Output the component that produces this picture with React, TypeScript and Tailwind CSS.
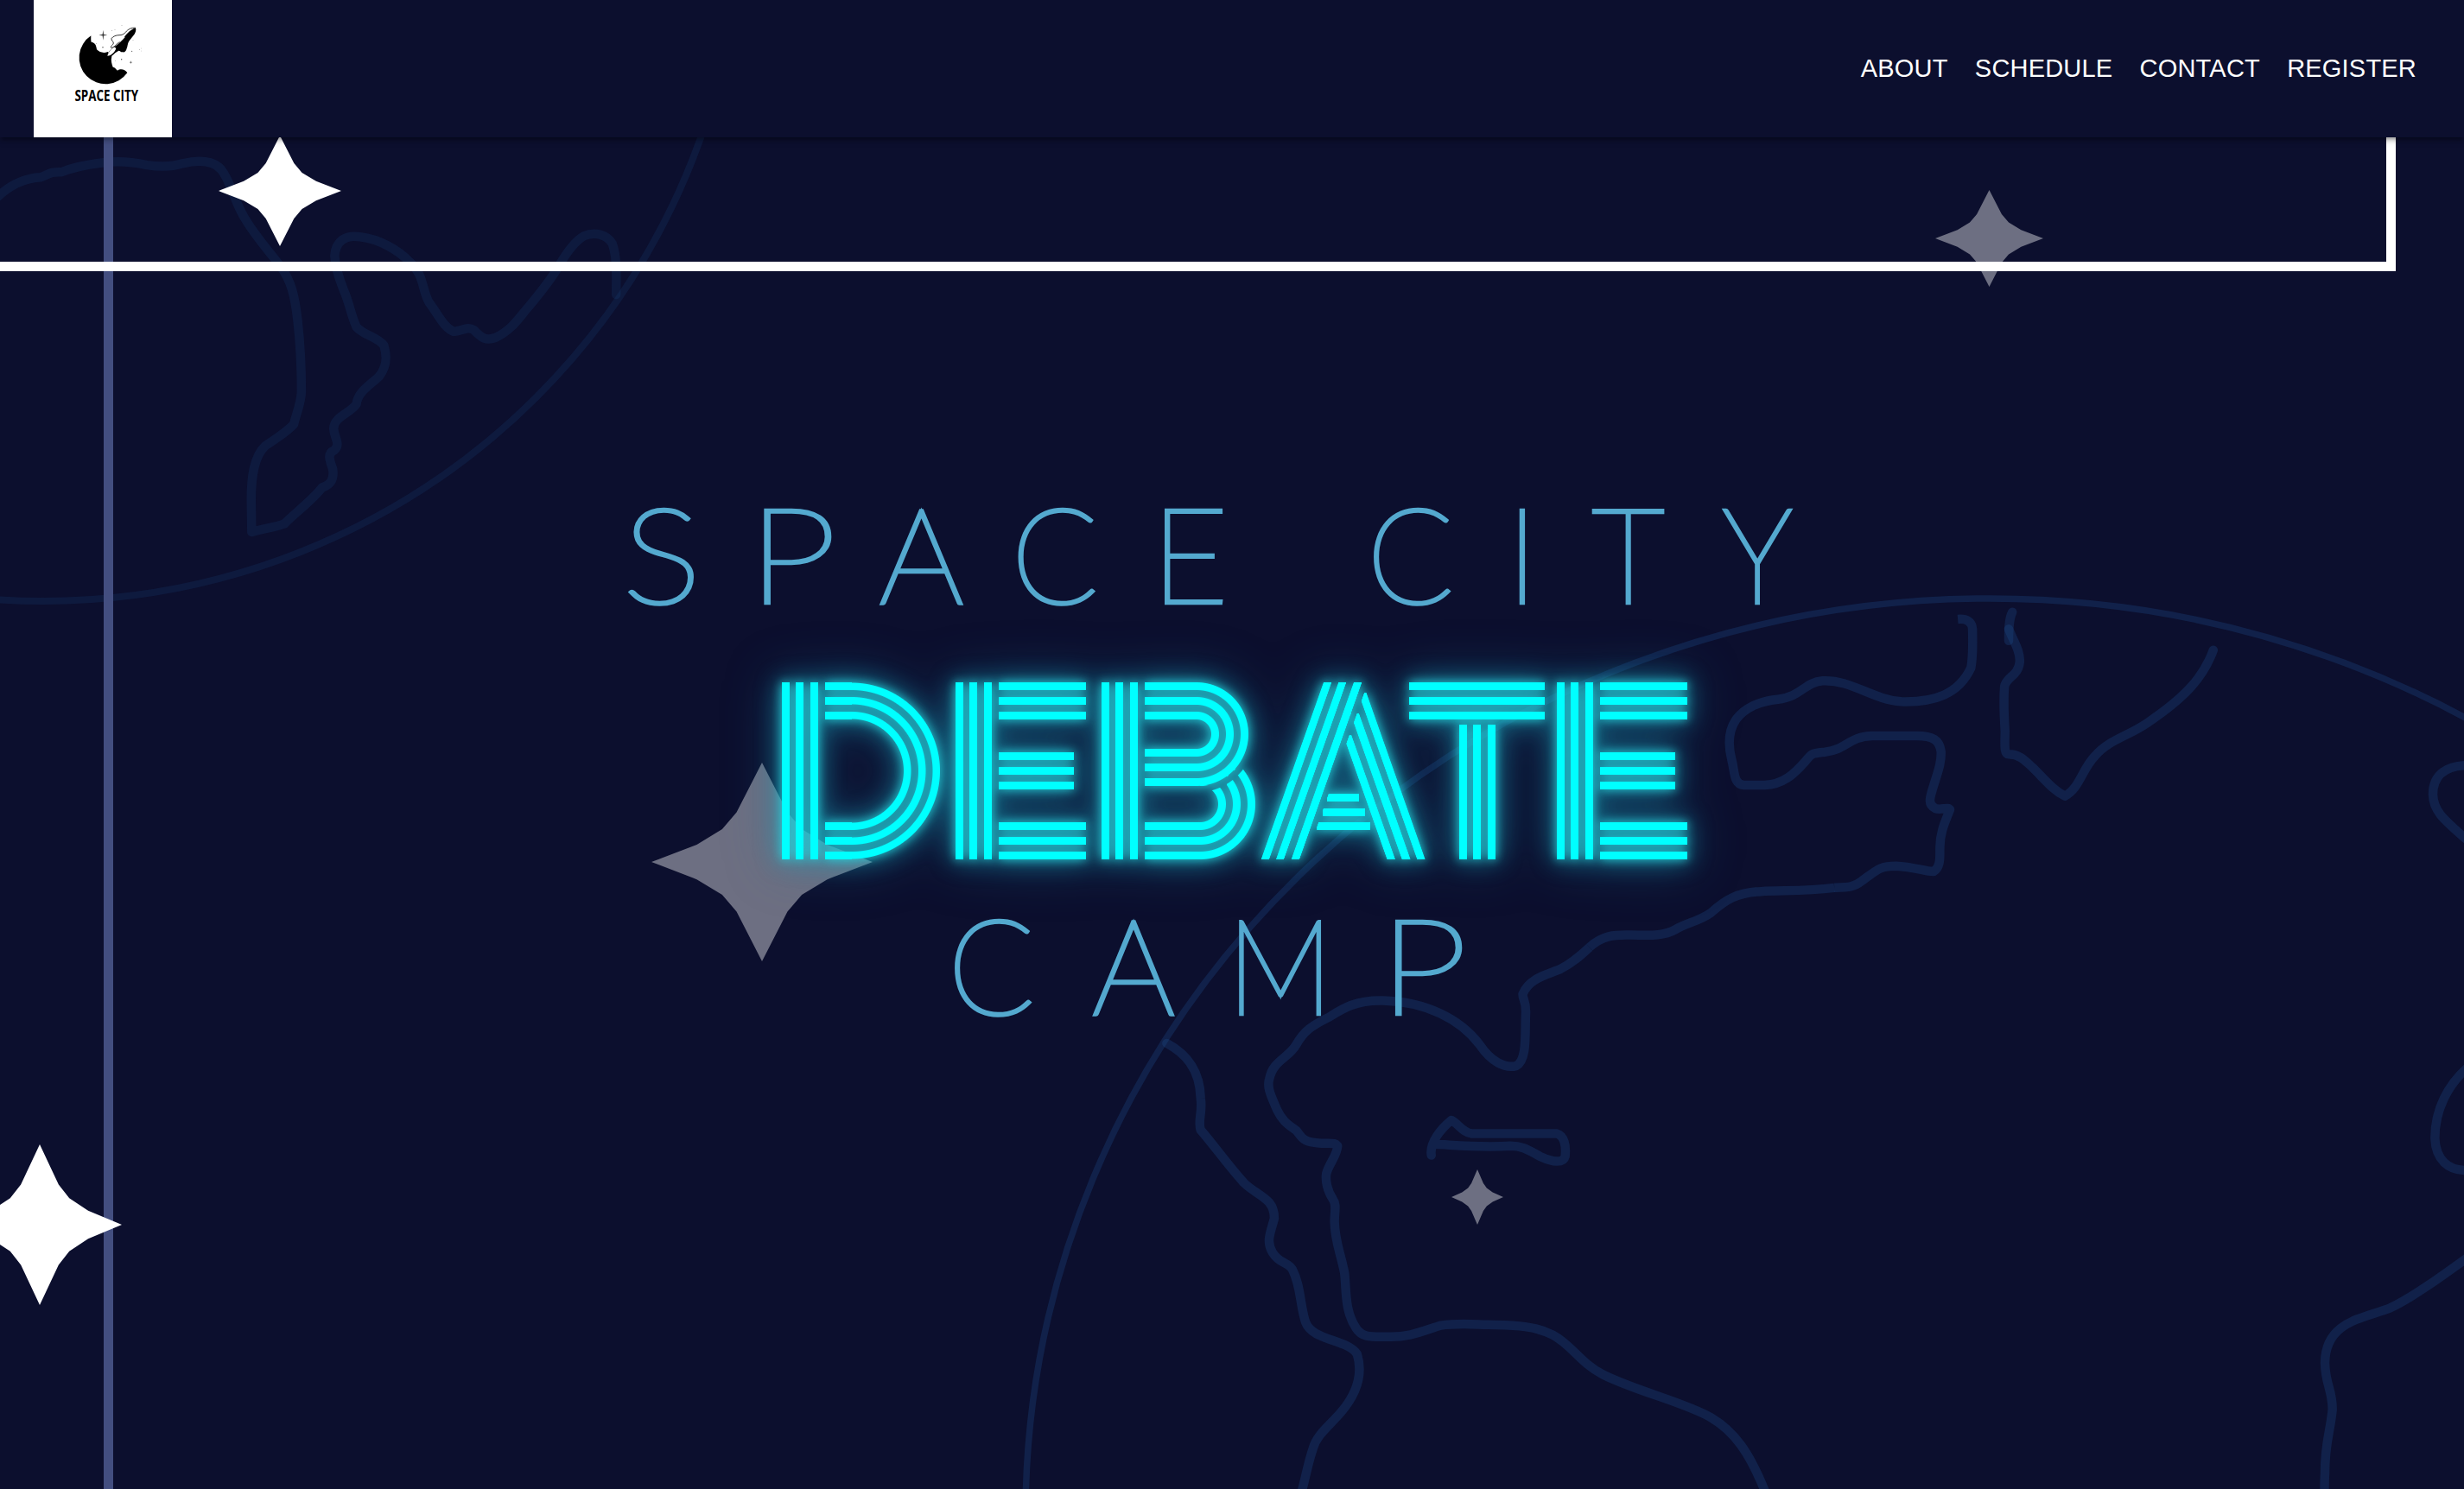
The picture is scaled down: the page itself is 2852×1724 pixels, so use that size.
function Star({ className }: { className: string }) {
  return (
    <svg className={"absolute " + className} viewBox="-100 -100 200 200" preserveAspectRatio="none" fill="#fff" aria-hidden="true">
      <path d="M100 0 59 17.5 36 33 23 50 0 100-23 50-36 33-59 17.5-100 0-59-17.5-36-33-23-50 0-100 23-50 36-33 59-17.5Z" />
    </svg>
  );
}

function Globes() {
  return (
    <svg className="absolute inset-0 h-full w-full" viewBox="0 0 2852 1724" fill="none" strokeLinecap="round" strokeLinejoin="round" aria-hidden="true">
      <g stroke="rgba(30,75,140,.18)">
        <circle cx="50" cy="-112" r="808" strokeWidth="8" />
        <path
          strokeWidth="10.5"
          vectorEffect="non-scaling-stroke"
          transform="translate(0 150) scale(.5486 .35714)"
          d="M-10 225C20 180 50 158 85 155C100 148 105 135 130 138C150 125 180 115 215 108C250 100 280 105 310 115C340 122 365 120 385 110C420 98 450 100 467 130C485 165 490 210 510 270C530 330 560 380 590 440C615 490 622 540 628 620C634 700 636 780 636 850C635 890 625 920 620 955C605 980 580 1005 560 1025C535 1060 530 1130 530 1200L531 1305C550 1295 580 1290 600 1278C625 1240 660 1200 680 1160C700 1150 705 1130 702 1100C695 1070 690 1050 705 1040C720 1020 705 1000 704 970C704 930 740 920 752 890C755 850 780 830 800 800C815 770 818 740 810 700C795 670 770 670 752 640C740 600 737 560 725 520C715 480 708 450 706 410C708 360 730 340 760 348C800 355 840 390 865 430C895 470 890 520 905 560C925 600 935 640 957 655C975 655 985 635 1000 650C1015 675 1025 685 1045 675C1080 650 1095 610 1115 575C1145 520 1165 480 1180 440C1195 400 1215 360 1232 345C1255 330 1280 340 1292 370C1303 420 1300 480 1300 535"
        />
      </g>
      <g stroke="rgba(30,75,140,.3)" strokeWidth="10.5">
        <ellipse cx="2303" cy="1755" rx="1116" ry="1062" strokeWidth="7.5" />
        <path
          vectorEffect="non-scaling-stroke"
          transform="translate(1080 1040) scale(.5102 .43623)"
          d="M530 385C570 410 605 450 607 530C612 570 600 590 607 615C640 660 670 710 705 755C735 790 775 795 774 850C765 890 755 910 770 940C785 970 805 965 815 985C835 1030 832 1080 845 1125C860 1175 940 1170 962 1210C975 1260 965 1310 925 1365C895 1405 870 1425 862 1460C850 1500 845 1540 835 1580"
        />
        <path
          strokeLinecap="butt"
          vectorEffect="non-scaling-stroke"
          transform="translate(1400 1100) scale(.44643 .39796)"
          d="M1442 1580C1400 1460 1360 1400 1300 1360C1230 1315 1110 1285 1020 1235C960 1200 940 1150 890 1120C840 1090 780 1092 720 1090C670 1088 640 1085 600 1092C560 1105 520 1128 460 1125C420 1125 395 1128 380 1100C350 1050 355 990 350 940C340 880 325 850 324 790C324 760 330 740 320 725C305 700 300 670 303 650C310 620 330 600 332 570C325 560 320 563 290 562C240 560 240 545 225 525C205 508 190 500 175 465C160 425 148 400 155 375C165 320 205 315 225 275C245 235 265 220 310 195C345 170 380 145 450 147C560 150 650 200 700 275C730 325 765 345 795 337C825 320 817 240 820 180C820 145 812 145 812 128C830 80 880 70 910 55C940 38 960 18 985 -8"
        />
        <path
          strokeLinecap="butt"
          vectorEffect="non-scaling-stroke"
          transform="translate(1400 560) scale(.45918 .35714)"
          d="M957.6 1503C990 1464 1020 1462 1060 1463C1100 1463 1140 1470 1175 1445C1200 1425 1235 1418 1265 1390C1300 1350 1330 1325 1390 1322C1450 1318 1500 1322 1575 1310"
        />
        <path
          strokeLinecap="butt"
          vectorEffect="non-scaling-stroke"
          transform="translate(1900 660) scale(.60714 .33333)"
          d="M367.6 1103.6C395 1102 405 1102 420 1080C450 1040 455 1028 485 1028C520 1030 545 1050 557 1047C572 1030 568 990 569 960C569 910 580 870 588 832C585 822 570 835 560 828C545 815 550 790 555 760C565 700 572 670 571 630C568 590 555 576 525 576L440 576C395 578 390 625 350 632C325 637 325 635 312 665C290 710 270 745 235 747L195 747C175 745 178 700 172 660C165 610 165 560 180 520C195 480 225 455 260 449C305 440 310 390 345 385C400 380 440 450 495 457C560 460 605 430 628 340C633 290 631 240 631 205C630 180 620 168 603 171"
        />
        <path vectorEffect="non-scaling-stroke" transform="translate(1900 660) scale(.60714 .33333)" d="M707 146C700 170 700 210 700 245" />
        <path
          vectorEffect="non-scaling-stroke"
          transform="translate(1900 660) scale(.60714 .33333)"
          d="M700 205C710 250 722 280 721 320C718 370 695 370 692 405C690 450 691 500 693 560C693 600 690 640 700 640C720 640 730 660 745 685C770 730 785 765 807 785C835 760 840 690 865 645C890 590 930 575 965 530C1030 450 1070 380 1090 278"
        />
        <path
          vectorEffect="non-scaling-stroke"
          transform="translate(2500 800) scale(.33333 .63776)"
          d="M1070 135C1000 135 948 150 948 188C950 220 990 235 1070 272M1070 683C1000 715 955 760 955 812C958 850 1000 872 1070 870M1070 1028C980 1062 880 1100 800 1120C700 1140 575 1145 573 1220C575 1260 600 1270 599 1305C590 1350 573 1365 573 1420C570 1450 570 1465 585 1490C600 1530 600 1545 630 1580"
        />
        <path
          vectorEffect="non-scaling-stroke"
          transform="translate(1400 1100) scale(.44643 .39796)"
          d="M575 597C570 560 600 520 627 495C645 505 655 530 680 534L900 534C920 540 925 570 922 600C918 620 890 618 860 602C830 585 815 570 780 570C700 575 640 568 585 565"
        />
      </g>
    </svg>
  );
}

function Logo() {
  return (
    <svg className="h-full w-full" viewBox="0 0 160 159" role="img" aria-label="Space City">
      <g transform="translate(31 0) scale(.33333)">
        <path d="M106 124A92 91.5 0 1 0 232 253C224 240 208 238 198 245C192 240 190 234 182 233C178 222 174 210 178 196L164 180C150 186 136 182 126 172C124 156 120 148 107 146C105 138 106 132 106 124Z" />
        <path d="M261 97C264 106 260 116 253 124L240 140C232 150 234 160 230 168C228 178 222 183 216 181C209 182 207 176 202 176L190 184C184 190 178 196 172 198C164 200 160 196 162 190C168 178 178 168 190 158L222 128C232 116 244 102 261 97Z" />
        <path d="M163 194C166 182 176 170 186 163L193 167C190 180 176 194 163 194Z" fill="#fff" />
        <path d="M222 128C210 140 200 152 186 160" stroke="#fff" strokeWidth="5" fill="none" />
        <path d="M261 97C246 95 234 102 226 112C220 120 212 122 204 122C194 122 182 126 177 134C176 140 184 144 184 150C182 158 172 160 176 166C184 168 196 150 206 146" stroke="#000" strokeWidth="2.4" fill="none" />
        <path d="M148 104L150 119 163 122 150 124 148 140 146 124 133 122 146 119Z" fill="#333" />
        <path d="M244 210L245 215 250 216 245 218 244 223 243 218 239 216 243 215Z" fill="#555" />
        <g fill="#555">
          <circle cx="147" cy="164" r="2.2" /><circle cx="212" cy="206" r="2.2" /><circle cx="248" cy="178" r="1.8" />
          <circle cx="179" cy="107" r="1.3" /><circle cx="189" cy="104" r="1.2" /><circle cx="213" cy="88" r="1.3" />
          <circle cx="275" cy="172" r="1.3" /><circle cx="281" cy="168" r="1" /><circle cx="281" cy="177" r="1" />
          <circle cx="125" cy="151" r="1.3" /><circle cx="191" cy="211" r="1" /><circle cx="252" cy="139" r="1.2" />
        </g>
      </g>
      <text x="47.5" y="117.3" textLength="73.5" lengthAdjust="spacingAndGlyphs" className="font-['Open_Sans',sans-serif] text-[18px] font-bold">SPACE CITY</text>
    </svg>
  );
}

// Each neon letter is text used as a clip for striped gradients.
const neon =
  "flex h-[205px] shrink-0 justify-center whitespace-nowrap bg-clip-text bg-no-repeat text-transparent [-webkit-text-stroke:96px_transparent]";

const letterE =
  "w-[151px] [background-image:var(--v),var(--h),var(--h),var(--h)] [background-size:42px_205px,101px_43px,87px_43px,101px_43px] [background-position:0_0,50px_0,50px_81px,50px_162px]";

function Thin({ c, className }: { c: string; className: string }) {
  return <span className={"flex h-[112px] shrink-0 justify-center " + className}>{c}</span>;
}

export default function App() {
  return (
    <div className="relative flex h-[1724px] w-full flex-col overflow-hidden bg-[#0c0f2e]">
      <Globes />
      <div className="absolute top-0 left-[120px] h-full w-[11px] bg-[#434e80]" />
      <div className="absolute top-0 left-0 h-[314px] w-[2773px] border-r-[11px] border-b-[11px] border-white" />
      <Star className="top-[157px] left-[253px] h-[128px] w-[142px]" />
      <Star className="top-[220px] left-[2240px] h-[112px] w-[125px] opacity-40" />
      <Star className="top-[883px] left-[754px] h-[230px] w-[256px] opacity-40" />
      <Star className="top-[1354px] left-[1680px] h-[64px] w-[60px] opacity-40" />
      <Star className="top-[1325px] left-[-49px] h-[186px] w-[190px]" />

      <header className="relative flex h-[159px] shrink-0 items-center justify-between bg-[#0c0f2e] pr-[55px] pl-[39px] shadow-[0_4px_4px_rgba(0,0,0,.14),0_6px_2px_-4px_rgba(0,0,0,.12),0_2px_10px_rgba(0,0,0,.2)]">
        <a className="h-[159px] w-40 bg-white">
          <Logo />
        </a>
        <nav className="mb-[2px] flex gap-[31.2px] font-['Liberation_Sans',Arial,sans-serif] text-[29px] leading-[42px] tracking-[.2px] text-white">
          <a>ABOUT</a>
          <a>SCHEDULE</a>
          <a>CONTACT</a>
          <a>REGISTER</a>
        </nav>
      </header>

      <h1 className="relative mt-[424px] font-[Lato,sans-serif] text-[153px] leading-[112px] font-thin text-[#54a9cf] [-webkit-text-stroke:4.5px_#54a9cf]">
        <span className="flex pl-[727px]">
          <Thin c="S" className="w-[76px] translate-x-[1px] scale-x-[1.12]" />
          <Thin c="P" className="ml-[80px] w-[80px] translate-x-[-6px] scale-x-[1.2]" />
          <Thin c="A" className="ml-[55px] w-[97px]" />
          <Thin c="C" className="ml-[63px] w-[91px] translate-x-[-2.5px] scale-x-[.96]" />
          <Thin c="E" className="ml-[78px] w-[69px] translate-x-[-4.4px]" />
          <Thin c="C" className="ml-[174px] w-[90px] translate-x-[-2.5px] scale-x-[.96]" />
          <Thin c="I" className="ml-[79px] w-[6px]" />
          <Thin c="T" className="ml-[78px] w-[83px] scale-x-[.96]" />
          <Thin c="Y" className="ml-[68px] w-[80px] scale-x-[.92]" />
        </span>
        <span className="mt-[95px] flex pl-[905px] font-[Inter,sans-serif] text-[180px] leading-[205px] font-black [filter:drop-shadow(0_0_6px_rgba(40,220,228,.95))_drop-shadow(0_0_13px_rgba(30,190,205,.6))_drop-shadow(0_0_26px_rgba(20,120,160,.5))] [--h:linear-gradient(#0ff_9px,#0000_9px_17px,#0ff_17px_26px,#0000_26px_34px,#0ff_34px_43px)] [--v:linear-gradient(90deg,#0ff_9px,#0000_9px_16.5px,#0ff_16.5px_25.5px,#0000_25.5px_33px,#0ff_33px_42px)]">
          <span className={neon + " w-[184px] [background-image:var(--v),var(--h),var(--h),radial-gradient(circle_at_0_50%,#0000_59.5px,#0ff_60.5px_68px,#0000_69px_76.5px,#0ff_77.5px_85px,#0000_86px_93px,#0ff_94px_101.5px,#0000_102.5px)] [background-size:42px_205px,31px_43px,31px_43px,103px_205px] [background-position:0_0,50px_0,50px_162px,81px_0]"}>D</span>
          <span className={neon + " ml-[17px] " + letterE}>E</span>
          <span className={neon + " ml-[18px] w-[179px] [background-image:var(--v),var(--h),var(--h),var(--h),radial-gradient(circle_at_0_60px,#0000_16.5px,#0ff_17.5px_25.5px,#0000_26.5px_33.5px,#0ff_34.5px_42.5px,#0000_43.5px_50.5px,#0ff_51.5px_59.5px,#0000_60.5px),radial-gradient(circle_at_0_22px,#0000_20.5px,#0ff_21.5px_29.5px,#0000_30.5px_37.5px,#0ff_38.5px_46.5px,#0000_47.5px_54.5px,#0ff_55.5px_63.5px,#0000_64.5px),radial-gradient(circle_at_-31px_41px,#0000_20.5px,#0ff_21.5px_29.5px,#0000_30.5px_37.5px,#0ff_38.5px_46.5px,#0000_47.5px_54.5px,#0ff_55.5px_63.5px,#0000_64.5px)] [background-size:42px_205px,60px_43px,60px_43px,64px_43px,61px_120px,31px_86px,34px_105px] [background-position:0_0,50px_0,50px_77px,50px_162px,110px_0,114px_119px,145px_100px] [mask-image:linear-gradient(#000,#000),radial-gradient(circle_at_0_60px,#000_60px,#0000_61px_67px,#000_68px)] [mask-size:110px_205px,70px_205px] [mask-position:0_0,110px_0] [mask-repeat:no-repeat]"}>B</span>
          <span className={neon + " ml-[6px] w-[190px] [background-image:linear-gradient(109.43deg,#0000_67.5px,#0ff_68.3px_76.3px,#0000_77px_83.8px,#0ff_84.6px_92.4px,#0000_93px_100.5px,#0ff_101.2px_109.4px,#0000_110px),linear-gradient(250.57deg,#0000_64.2px,#0ff_65px_73px,#0000_73.7px),linear-gradient(250.57deg,#0000_72.3px,#0ff_73px_81.6px,#0000_82.3px),linear-gradient(250.57deg,#0000_80.6px,#0ff_81.3px_89.5px,#0000_90.2px),linear-gradient(#0ff,#0ff),linear-gradient(#0ff,#0ff),linear-gradient(#0ff,#0ff)] [background-size:190px_205px,190px_193px,190px_169px,190px_144px,37px_9px,49px_9px,62px_9px] [background-position:0_0,0_12px,0_36px,0_61px,76px_129px,71px_146px,64px_162px] [mask-image:linear-gradient(109.43deg,#000_109.8px,#0000_110.4px_116px,#000_116.6px)]"}>A</span>
          <span className={neon + " ml-[-19px] w-[158px] [background-image:var(--h),var(--v)] [background-size:157px_43px,42px_156px] [background-position:0_0,58px_49px]"}>T</span>
          <span className={neon + " ml-[13px] " + letterE}>E</span>
        </span>
        <span className="mt-[64px] flex pl-[1105px]">
          <Thin c="C" className="w-[90px] translate-x-[-2.5px] scale-x-[.96]" />
          <Thin c="A" className="ml-[69px] w-[96px] scale-x-[.98]" />
          <Thin c="M" className="ml-[74px] w-[95px] scale-x-[.9]" />
          <Thin c="P" className="ml-[85px] w-[79px] translate-x-[-6px] scale-x-[1.19]" />
        </span>
      </h1>
    </div>
  );
}
